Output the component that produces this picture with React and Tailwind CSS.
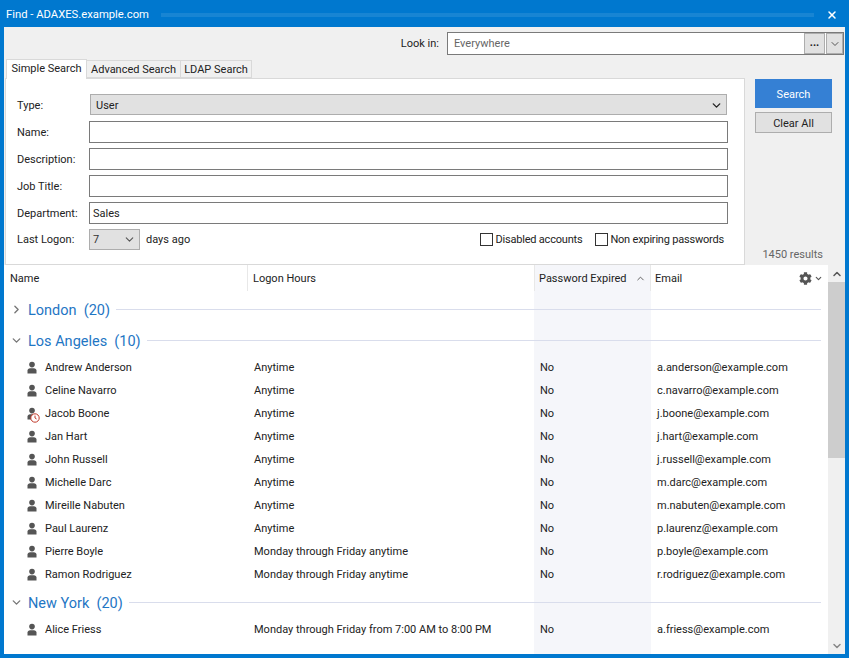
import React from "react";
import { ChevronDown, ChevronRight, ChevronUp, X } from "lucide-react";
import { FaCog } from "react-icons/fa";

const UserIcon = ({ expired }) => (
  <span className="relative block w-[14px] h-[14px]">
    <svg viewBox="0 0 14 14" className="w-[14px] h-[14px]" fill="#555">
      <circle cx="7" cy="3.6" r="2.8" />
      <path d="M2.5 12.5V9.6c0-1.4 1.2-2.4 2.6-2.4h3.8c1.4 0 2.6 1 2.6 2.4v2.9z" />
    </svg>
    {expired && (
      <svg viewBox="0 0 10 10" className="absolute left-[5px] top-[6px] w-[10px] h-[10px]" fill="#fff" stroke="#c0392b" strokeWidth="1">
        <circle cx="5" cy="5" r="4.2" />
        <path d="M5 2.6V5l1.6 1" fill="none" />
      </svg>
    )}
  </span>
);

const Row = ({ name, hours, email, expired }) => (
  <div className="flex items-center h-[23px]">
    <div className="w-[244px] flex items-center pl-[21px] gap-[6px]">
      <UserIcon expired={expired} />
      <span>{name}</span>
    </div>
    <div className="w-[286px] pl-[6px]">{hours}</div>
    <div className="w-[117px] pl-[6px]">No</div>
    <div className="pl-[6px]">{email}</div>
  </div>
);

const Group = ({ title, open, children, className }) => (
  <div className={className}>
    <div className={open ? "flex items-center h-[31px] pt-[5px] pr-[7px] mb-[3px]" : "flex items-center h-[31px] pt-[5px] pr-[7px]"}>
      <span className="w-[24px] pl-[6px] text-[#777]">
        {open ? <ChevronDown size={13} strokeWidth={2.5} /> : <ChevronRight size={13} strokeWidth={2.5} />}
      </span>
      <span className="text-[#1f76c4] text-[14.5px] whitespace-pre pt-[4px]">{title}</span>
      <span className="flex-1 h-px bg-[#d9ddec] ml-[6px]" />
    </div>
    {children}
  </div>
);

const Field = ({ label, value }) => (
  <div className="flex items-center h-[22px] mb-[5px]">
    <span className="w-[72px]">{label}</span>
    <div className="w-[639px] h-[22px] border border-[#7a7a7a] bg-white px-[3px] flex items-center">{value}</div>
  </div>
);

const Check = ({ label }) => (
  <label className="flex items-center gap-[2px] tracking-[-0.2px]">
    <span className="w-[13px] h-[13px] border border-[#333] bg-white" />
    {label}
  </label>
);

const la = [
  ["Andrew Anderson", "Anytime", "a.anderson@example.com"],
  ["Celine Navarro", "Anytime", "c.navarro@example.com"],
  ["Jacob Boone", "Anytime", "j.boone@example.com", true],
  ["Jan Hart", "Anytime", "j.hart@example.com"],
  ["John Russell", "Anytime", "j.russell@example.com"],
  ["Michelle Darc", "Anytime", "m.darc@example.com"],
  ["Mireille Nabuten", "Anytime", "m.nabuten@example.com"],
  ["Paul Laurenz", "Anytime", "p.laurenz@example.com"],
  ["Pierre Boyle", "Monday through Friday anytime", "p.boyle@example.com"],
  ["Ramon Rodriguez", "Monday through Friday anytime", "r.rodriguez@example.com"],
];

export default function App() {
  return (
    <div className="w-[849px] h-[658px] bg-[#0078cf] flex flex-col overflow-hidden text-[11px] leading-none text-[#222] font-[family-name:Roboto,sans-serif]">
      {/* title bar */}
      <div className="h-[27px] shrink-0 flex items-center pl-[6px] pr-[11px] pt-[3px] text-white text-[11.25px]">
        <span className="whitespace-nowrap">Find - ADAXES.example.com</span>
        <span className="flex-1 h-[4px] mx-[12px] opacity-10 bg-[radial-gradient(#ffffff_0.7px,transparent_0.8px)] bg-[length:2px_2px]" />
        <X size={12} strokeWidth={3} />
      </div>

      <div className="flex-1 min-h-0 mx-[4px] mb-[4px] bg-[#f0f0f0] flex flex-col">
        {/* look in */}
        <div className="h-[31px] shrink-0 flex items-start justify-end pr-[1px] pt-[5px]">
          <span className="mr-[8px] leading-[23px]">Look in:</span>
          <div className="w-[397px] h-[23px] border border-[#7a7a7a] bg-white flex items-center pl-[6px]">
            <span className="flex-1 text-[#666]">Everywhere</span>
            <span className="w-[21px] h-[21px] bg-[#e1e1e1] border border-[#adadad] flex items-center justify-center font-bold pb-[3px]">...</span>
            <span className="w-[17px] h-[21px] ml-[1px] bg-[#e1e1e1] border border-[#adadad] flex items-center justify-center text-[#555]">
              <ChevronDown size={12} />
            </span>
          </div>
        </div>

        <div className="flex h-[207px] shrink-0">
          <div className="w-[740px] ml-[1px] flex flex-col">
            {/* tabs */}
            <div className="flex items-end h-[20px] pl-px whitespace-nowrap">
              <div className="w-[81px] h-[20px] bg-white border border-b-0 border-[#d9d9d9] flex items-center justify-center pb-[2px] relative top-px z-10">Simple Search</div>
              <div className="w-[94px] h-[18px] bg-[#f0f0f0] border border-l-0 border-[#d9d9d9] flex items-center justify-center pt-px">Advanced Search</div>
              <div className="w-[71px] h-[18px] bg-[#f0f0f0] border border-l-0 border-[#d9d9d9] flex items-center justify-center pt-px">LDAP Search</div>
            </div>
            {/* form */}
            <div className="flex-1 bg-white border border-[#d9d9d9] pl-[11px] pt-[15px]">
              <div className="flex items-center h-[21px] mb-[6px]">
                <span className="w-[73px] pt-px">Type:</span>
                <div className="w-[637px] h-[21px] bg-[#e1e1e1] border border-[#adadad] flex items-center justify-between pl-[5px] pr-[3px] pt-px">
                  User
                  <ChevronDown size={13} strokeWidth={2.5} />
                </div>
              </div>
              <Field label="Name:" />
              <Field label="Description:" />
              <Field label="Job Title:" />
              <Field label="Department:" value="Sales" />
              <div className="flex items-center h-[21px] mt-[1px] pr-[20px]">
                <span className="w-[72px]">Last Logon:</span>
                <div className="w-[51px] h-[21px] bg-[#e1e1e1] border border-[#adadad] flex items-center justify-between pl-[3px] pr-[3px] text-[#333]">
                  7
                  <ChevronDown size={13} className="text-[#555]" />
                </div>
                <span className="ml-[6px] flex-1">days ago</span>
                <Check label="Disabled accounts" />
                <span className="w-[13px]" />
                <Check label="Non expiring passwords" />
              </div>
            </div>
          </div>

          {/* buttons */}
          <div className="flex-1 flex flex-col pl-[10px] pt-[21px] pb-[5px]">
            <button className="w-[77px] h-[29px] bg-[#3580d4] text-white mb-[4px] pt-px">Search</button>
            <button className="w-[77px] h-[21px] bg-[#e1e1e1] border border-[#adadad] pt-px">Clear All</button>
            <span className="mt-auto ml-auto mr-[22px] text-[#666]">1450 results</span>
          </div>
        </div>

        {/* results */}
        <div className="flex-1 min-h-0 flex">
          <div className="w-[824px] bg-white relative overflow-hidden">
            <div className="absolute left-[530px] top-0 bottom-0 w-[117px] bg-[#f5f6fa]" />
            <div className="relative">
              <div className="flex items-center h-[26px] bg-white whitespace-nowrap">
                <div className="w-[244px] h-full flex items-center pl-[6px] border-r border-[#e8e8e8]">Name</div>
                <div className="w-[286px] h-full flex items-center pl-[5px]">Logon Hours</div>
                <div className="w-[117px] h-full flex items-center justify-between pl-[4px] pr-[4px] bg-[#f5f6fa] border-x border-[#e8e8e8]">
                  Password Expired
                  <ChevronUp size={11} className="text-[#555]" />
                </div>
                <div className="flex-1 h-full flex items-center justify-between pl-[4px] pr-[5px]">
                  Email
                  <span className="flex items-center gap-[2px] text-[#555]">
                    <FaCog size={13} />
                    <ChevronDown size={9} strokeWidth={3} />
                  </span>
                </div>
              </div>
              <Group title="London  (20)" />
              <Group title="Los Angeles  (10)" open>
                {la.map((r) => (
                  <Row key={r[0]} name={r[0]} hours={r[1]} email={r[2]} expired={r[3]} />
                ))}
              </Group>
              <Group title="New York  (20)" open className="-mt-[2px]">
                <Row name="Alice Friess" hours="Monday through Friday from 7:00 AM to 8:00 PM" email="a.friess@example.com" />
              </Group>
            </div>
          </div>

          {/* scrollbar */}
          <div className="w-[17px] flex flex-col bg-[#f0f0f0] text-[#555]">
            <span className="h-[17px] flex items-center justify-center"><ChevronUp size={12} strokeWidth={3} /></span>
            <span className="h-[176px] bg-[#cdcdcd]" />
            <span className="mt-auto h-[17px] flex items-center justify-center text-[#888]"><ChevronDown size={12} strokeWidth={3} /></span>
          </div>
        </div>
      </div>
    </div>
  );
}
